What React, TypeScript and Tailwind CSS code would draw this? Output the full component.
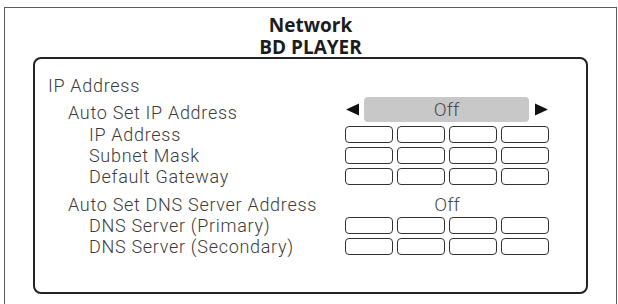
import React from "react";

const body = { fontFamily: "Roboto, 'Liberation Sans', sans-serif" };
const head = { fontFamily: "'Open Sans', 'Noto Sans', sans-serif" };

function Boxes() {
  return (
    <div className="flex gap-[4px] mt-[3px]">
      {[0, 1, 2, 3].map((i) => (
        <div key={i} className="w-[48px] h-[17px] border border-[#333] rounded-[4px] bg-white" />
      ))}
    </div>
  );
}

function SubRow({ label }: { label: string }) {
  return (
    <div className="flex items-start h-[21px]">
      <div className="w-[310px] pl-[54px] pt-[1px] leading-[21px] whitespace-nowrap">{label}</div>
      <Boxes />
    </div>
  );
}

export default function App() {
  return (
    <div className="w-[618px] h-[304px] bg-white overflow-hidden pt-[7px] pl-[4px]">
      <div className="w-[613px] h-[320px] border border-b-0 border-[#5c5c5c]">
        <div
          className="pt-[6px] text-center text-[19px] leading-[22px] font-bold text-[#1c1c1c]"
          style={head}
        >
          <div>Network</div>
          <div>BD PLAYER</div>
        </div>
        <div
          className="-mt-[1px] ml-[28px] w-[555px] h-[237px] border-2 border-[#232323] rounded-[8px] text-[18px] tracking-[0.7px] font-light text-[#3c3c3c]"
          style={body}
        >
          <div className="pt-[15px] pl-[13px] leading-[23px]">IP Address</div>

          <div className="flex items-start h-[26px]">
            <div className="w-[310px] pl-[33px] pt-[5px] leading-[22px] whitespace-nowrap">
              Auto Set IP Address
            </div>
            <div className="flex items-center">
              <svg width="14" height="25" viewBox="0 0 14 25" className="ml-[1px]">
                <polygon points="0,12.5 13,6.5 13,18.5" fill="#111" />
              </svg>
              <div className="ml-[4px] w-[165px] h-[25px] rounded-[4px] bg-[#c8c8c8] flex items-center justify-center leading-[25px] tracking-normal text-[19px] text-[#4a4a4a]">
                Off
              </div>
              <svg width="14" height="25" viewBox="0 0 14 25" className="ml-[5px]">
                <polygon points="14,12.5 1,6.5 1,18.5" fill="#111" />
              </svg>
            </div>
          </div>

          <SubRow label="IP Address" />
          <SubRow label="Subnet Mask" />
          <SubRow label="Default Gateway" />

          <div className="flex items-start h-[28px] pt-[8px]">
            <div className="w-[310px] pl-[33px] leading-[21px] whitespace-nowrap">
              Auto Set DNS Server Address
            </div>
            <div className="w-[204px] text-center leading-[21px] tracking-normal text-[19px] text-[#4a4a4a]">Off</div>
          </div>

          <SubRow label="DNS Server (Primary)" />
          <SubRow label="DNS Server (Secondary)" />
        </div>
      </div>
    </div>
  );
}
